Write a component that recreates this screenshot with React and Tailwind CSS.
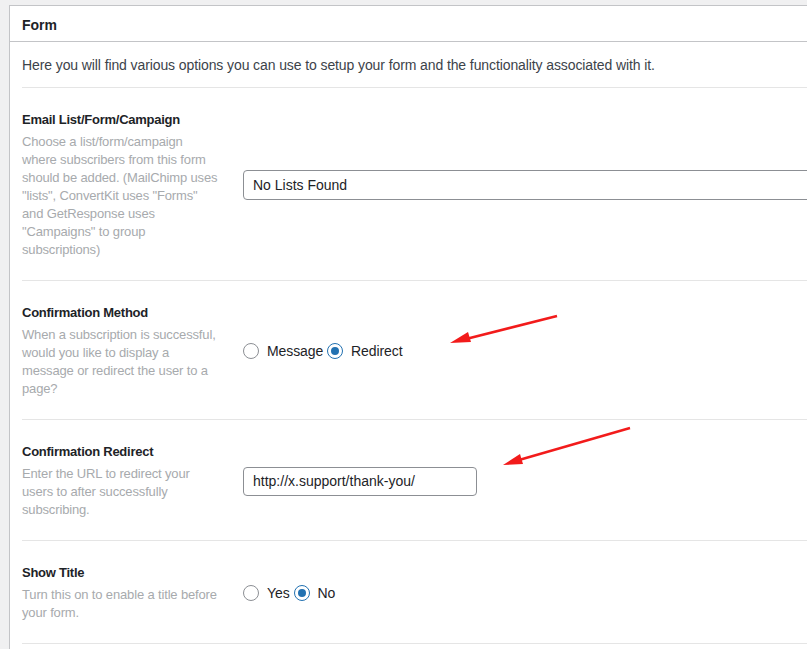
import React from 'react';

const font = { fontFamily: '"Liberation Sans", Arial, sans-serif' };

const Row = ({ label, desc, children }) => (
  <div className="flex items-center border-b border-[#e5e5e5] pt-[23px] pb-[21px]">
    <div className="w-[221px] shrink-0 pr-[23px]">
      <div className="text-[13px] font-bold leading-[18px] tracking-[-0.25px] text-[#1d2327] mb-[4px]">{label}</div>
      <div className="text-[13px] leading-[18px] tracking-[-0.15px] text-[#a7aaad]">{desc}</div>
    </div>
    <div className="flex-1 flex items-center">{children}</div>
  </div>
);

const Radio = ({ checked, label }) => (
  <label className="flex items-center mr-[4px] text-[14px] tracking-[-0.1px] text-[#1d2327]">
    <span
      className={
        'w-[16px] h-[16px] rounded-full border bg-white flex items-center justify-center mr-[8px] ' +
        (checked ? 'border-[#2271b1]' : 'border-[#8c8f94]')
      }
    >
      {checked && <span className="w-[8px] h-[8px] rounded-full bg-[#2271b1]" />}
    </span>
    {label}
  </label>
);

export default function App() {
  return (
    <div className="relative w-[807px] h-[649px] overflow-hidden bg-[#f0f0f1]" style={font}>
      <div className="ml-[9px] mt-[5px] w-[830px] bg-white border border-[#c3c4c7]">
        {/* panel header */}
        <div className="h-[36px] flex items-center px-[12px] pt-[3px] border-b border-[#c3c4c7]">
          <span className="text-[14px] font-semibold text-[#1d2327]">Form</span>
        </div>

        <div className="pl-[12px] pb-[30px]">
          <div className="h-[46px] flex items-center pt-[1px] border-b border-[#e5e5e5] text-[14px] tracking-[-0.1px] text-[#3c434a]">
            Here you will find various options you can use to setup your form and the functionality associated with it.
          </div>

          <Row
            label="Email List/Form/Campaign"
            desc={'Choose a list/form/campaign where subscribers from this form should be added. (MailChimp uses "lists", ConvertKit uses "Forms" and GetResponse uses "Campaigns" to group subscriptions)'}
          >
            <div className="w-[600px] h-[30px] border border-[#8c8f94] rounded-[4px] flex items-center px-[9px] text-[14px] text-[#1d2327]">
              No Lists Found
            </div>
          </Row>

          <Row
            label="Confirmation Method"
            desc="When a subscription is successful, would you like to display a message or redirect the user to a page?"
          >
            <Radio label="Message" />
            <Radio checked label="Redirect" />
          </Row>

          <Row
            label="Confirmation Redirect"
            desc="Enter the URL to redirect your users to after successfully subscribing."
          >
            <div className="w-[234px] h-[29px] border border-[#8c8f94] rounded-[4px] flex items-center px-[9px] text-[14px] text-[#1d2327]">
              http://x.support/thank-you/
            </div>
          </Row>

          <Row label="Show Title" desc="Turn this on to enable a title before your form.">
            <Radio label="Yes" />
            <Radio checked label="No" />
          </Row>
        </div>
      </div>

      {/* annotation arrows */}
      <svg className="absolute inset-0 pointer-events-none" width="807" height="649">
        <line x1="557" y1="316" x2="466" y2="339" stroke="#f21b1b" strokeWidth="2.5" />
        <polygon points="450,343 468,332 471,342" fill="#f21b1b" />
        <line x1="630" y1="428" x2="519" y2="460" stroke="#f21b1b" strokeWidth="2.5" />
        <polygon points="503,465 520,454 523,464" fill="#f21b1b" />
      </svg>
    </div>
  );
}
